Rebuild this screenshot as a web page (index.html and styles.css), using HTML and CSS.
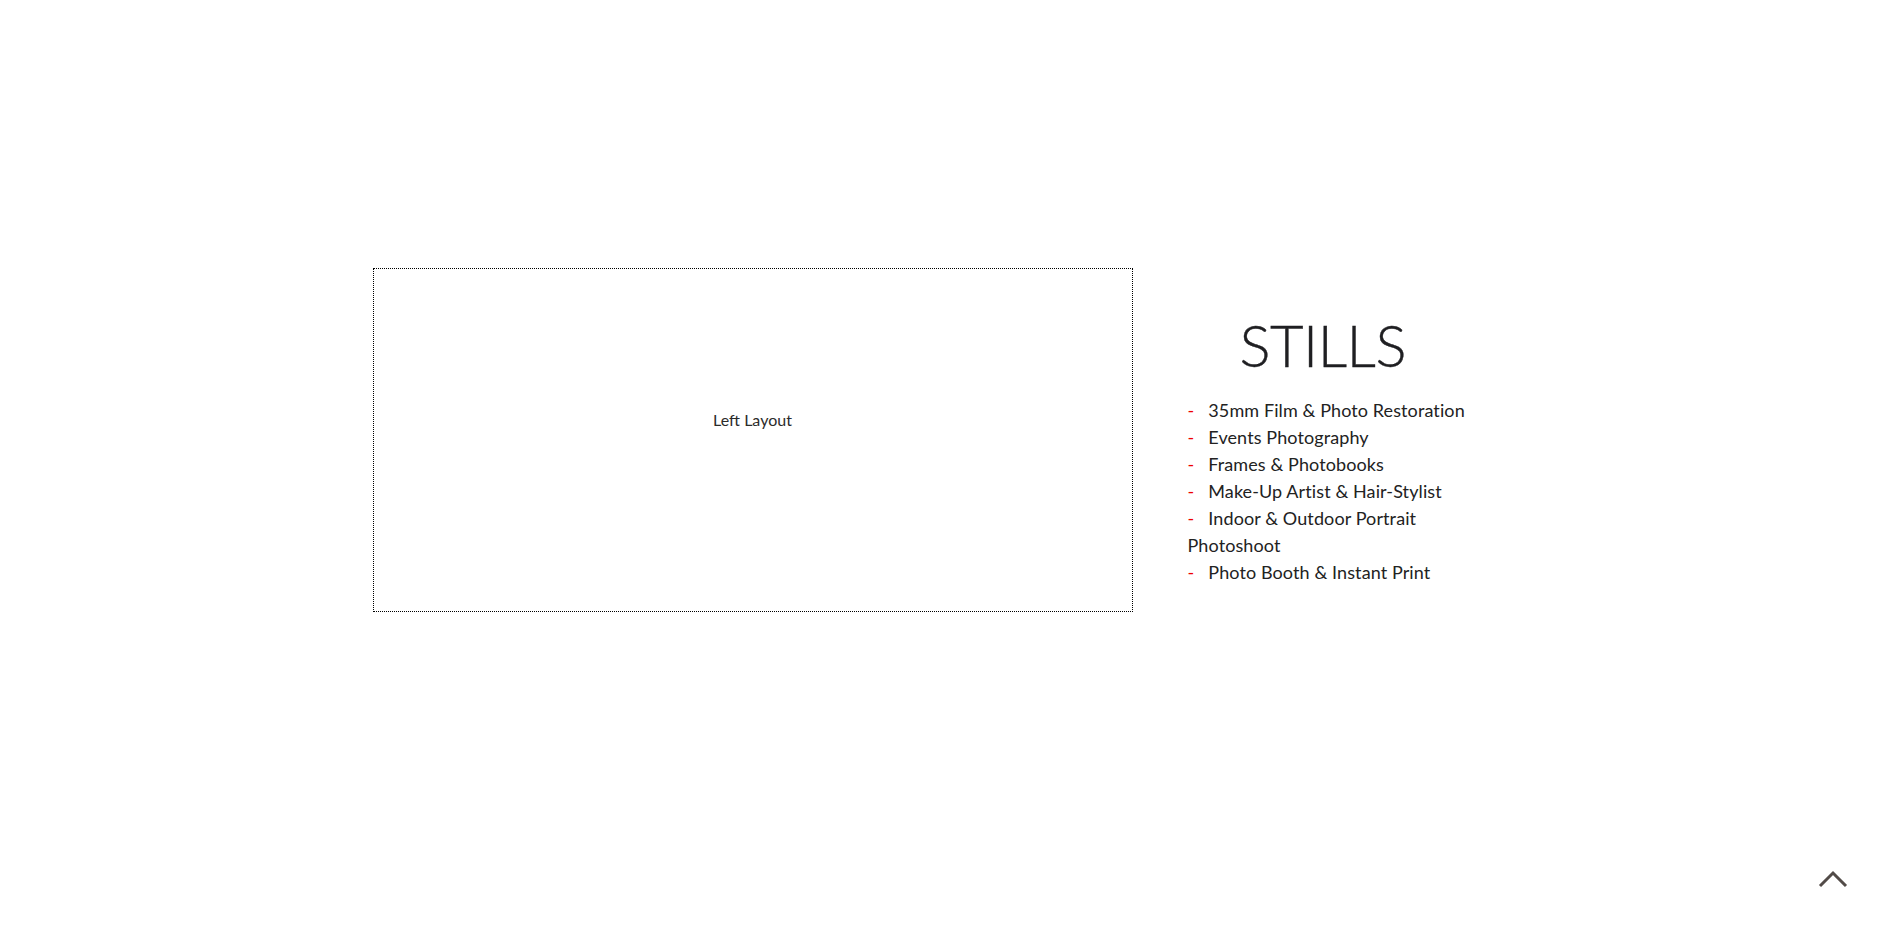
FILE: index.html
```html
<!DOCTYPE html>
<html>
<head>
<meta charset="utf-8">
<link rel="stylesheet" href="styles.css">
</head>
<body>
<main class="page">
  <section class="row">
    <div class="placeholder"><span class="placeholder-label">Left Layout</span></div>
    <div class="info">
      <h1 class="title">STILLS</h1>
      <p class="list">
        <span class="dash">-</span><span class="sp"></span>35mm Film &amp; Photo Restoration<br>
        <span class="dash">-</span><span class="sp"></span>Events Photography<br>
        <span class="dash">-</span><span class="sp"></span>Frames &amp; Photobooks<br>
        <span class="dash">-</span><span class="sp"></span>Make-Up Artist &amp; Hair-Stylist<br>
        <span class="dash">-</span><span class="sp"></span>Indoor &amp; Outdoor Portrait Photoshoot<br>
        <span class="dash">-</span><span class="sp"></span>Photo Booth &amp; Instant Print
      </p>
    </div>
  </section>
</main>
<a class="to-top" href="#" aria-label="Back to top">
  <svg width="30" height="18" viewBox="0 0 30 18"><polyline points="2,16 15,3 28,16" fill="none" stroke="#524b48" stroke-width="3"/></svg>
</a>
</body>
</html>
```

FILE: styles.css
```css
html, body {
  margin: 0;
  padding: 0;
  background: #fff;
}
body {
  font-family: Lato, "Open Sans", sans-serif;
  color: #222;
  height: 928px;
  overflow: hidden;
}
.page {
  padding-top: 268px;
}
.row {
  width: 1140px;
  margin: 0 auto;
  display: flex;
  gap: 55px;
  align-items: flex-start;
}
.placeholder {
  box-sizing: border-box;
  width: 760px;
  height: 344px;
  border: 1px dotted #000;
  display: flex;
  align-items: center;
  justify-content: center;
  padding-bottom: 42px;
}
.placeholder-label {
  font-size: 16px;
  color: #2b2b2b;
}
.info {
  width: 285px;
}
.title {
  margin: 48px 0 0 52px;
  font-size: 58px;
  line-height: 58px;
  font-weight: 300;
  letter-spacing: -0.5px;
  color: #1f1f22;
  -webkit-text-stroke: 0.4px #1f1f22;
}
.list {
  margin: 23px 0 0 0;
  font-size: 18px;
  line-height: 27px;
  letter-spacing: 0.1px;
  color: #222;
}
.dash {
  color: #e00;
}
.sp {
  display: inline-block;
  width: 14px;
}
.to-top {
  position: fixed;
  left: 1818px;
  top: 870px;
  display: block;
  width: 30px;
  height: 18px;
}
.to-top svg {
  display: block;
}
```
